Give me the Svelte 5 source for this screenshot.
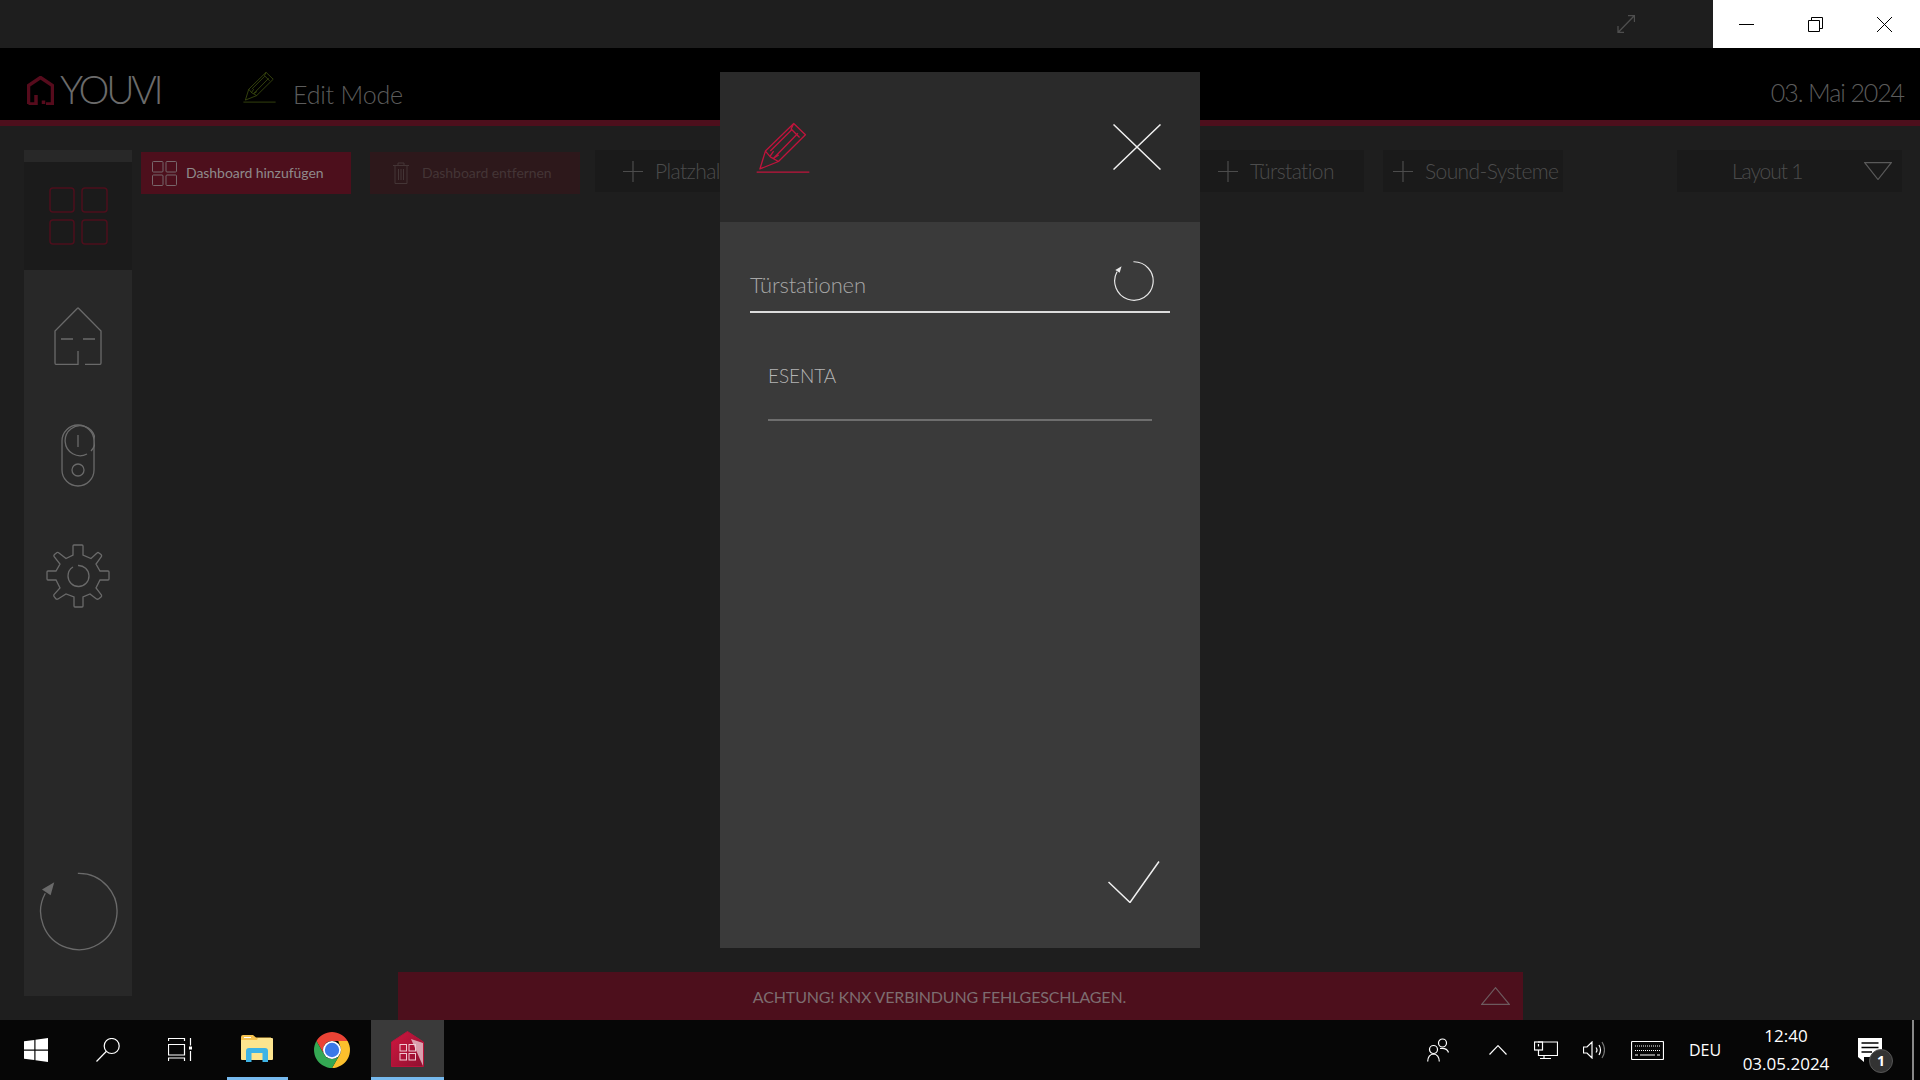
{#snippet pencil(cls)}
	<svg class="pencil {cls}" viewBox="106 150 166 158">
		<path d="M118 295 L135 240 L222 155 L258 190 L175 272 Z M135 240 L150 258 L175 272 M150 240 L215 175 M160 262 L235 185 M222 155 L214 172 L240 198 M148 258 L160 240 M160 262 L176 252" />
		<path d="M108 305 H270" />
	</svg>
{/snippet}

{#snippet refresh(cls)}
	<svg class="refresh {cls}" viewBox="110 90 245 250">
		<path d="M232 100 A115 115 0 1 1 134 160" />
		<polygon points="161,127 124,149 150,166" />
	</svg>
{/snippet}

{#snippet plus()}
	<svg class="plus" viewBox="0 0 20 21"><path d="M10 0 V21 M0 10.5 H20" /></svg>
{/snippet}

<div class="screen">
	<div class="titlebar">
		<svg class="expand" viewBox="0 0 18 18"><path d="M1 11 V17.5 H7 M17.5 7 V.5 H11 M1 17.5 L17.5 .5" /></svg>
		<div class="winbtns">
			<svg viewBox="0 0 15 15" class="wmin"><path d="M0 7.5 H15" /></svg>
			<svg viewBox="0 0 15 15" class="wres"><path d="M3.5 3 V.5 H14.5 V11.5 H12 M.5 3.5 H11.5 V14.5 H.5 Z" /></svg>
			<svg viewBox="0 0 15 15" class="wclose"><path d="M0 0 L15 15 M15 0 L0 15" /></svg>
		</div>
	</div>

	<header class="head">
		<svg class="logo" viewBox="0 0 27 29">
			<path d="M1.5 28 V9.5 L13.5 1.5 L25.5 9.5 V28 H19 M1.5 28 H9 V19" />
			<path d="M16.5 24.5 V28" />
		</svg>
		<span class="brand">YOUVI</span>
		{@render pencil('green')}
		<span class="mode">Edit Mode</span>
		<span class="date">03. Mai 2024</span>
	</header>

	<main class="main">
		<nav class="sidebar">
			<div class="selected">
				<svg class="grid" viewBox="0 0 59 58">
					<rect x="1" y="1" width="24" height="24" rx="3" />
					<rect x="33" y="1" width="25" height="24" rx="3" />
					<rect x="1" y="33" width="24" height="24" rx="3" />
					<rect x="33" y="33" width="25" height="24" rx="3" />
				</svg>
			</div>
			<svg class="home" viewBox="0 0 48 58">
				<path d="M24 .7 L47 24 V56 Q47 57.3 46 57.3 H31 M24 .7 L1 24 V56 Q1 57.3 2 57.3 H24 V44" />
				<path d="M7 32 H19 M29 32 H41" />
			</svg>
			<svg class="door" viewBox="0 0 34 63">
				<rect x="1" y="1" width="32" height="61" rx="16" />
				<path d="M30 27 A15 15 0 1 0 26 30" />
				<path d="M17 11 V23" />
				<circle cx="17" cy="46" r="6" />
			</svg>
			<svg class="gear" viewBox="0 0 64 64">
				<path d="M28 1 H36 Q37 1 37 2 V11 L45 14.5 L51 9 Q52 8 53 9 L55 10.5 Q56 11.5 55.5 12.5 L50 20 L54 27 H62 Q63 27 63 28 V35 Q63 36 62 36 H54 L50 44 L55.5 51 Q56 52 55 53 L52.5 55 Q51.5 55.5 50.5 55 L44 50 L37 53 V62 Q37 63 36 63 H29 Q28 63 28 62 V53 L20 50 L12 55 Q11 55.5 10 55 L8 52.5 Q7.5 51.5 8 50.5 L14 44 L10 36 H2 Q1 36 1 35 V28 Q1 27 2 27 H10 L14 20 L8 12.5 Q7.5 11.5 8.5 10.5 L11 8.5 Q12 8 13 9 L20 14.5 L27 11 V2 Q27 1 28 1 Z" />
				<path d="M32 21.5 A10.5 10.5 0 1 1 22 32 A10.5 10.5 0 0 1 27 23" />
			</svg>
			{@render refresh('side')}
		</nav>

		<div class="content">
			<div class="toolbar">
				<div class="btn red">
					<svg class="btn-icon" viewBox="0 0 25 25">
						<rect x=".5" y=".5" width="10.5" height="10.5" rx="1" />
						<rect x="14" y=".5" width="10.5" height="10.5" rx="1" />
						<rect x=".5" y="14" width="10.5" height="10.5" rx="1" />
						<rect x="14" y="14" width="10.5" height="10.5" rx="1" />
					</svg>
					<span>Dashboard hinzufügen</span>
				</div>
				<div class="btn off">
					<svg class="trash" viewBox="0 0 16 22">
						<path d="M0 3.5 H16 M5 3.5 V1 H11 V3.5 M2 3.5 V21.5 H14 V3.5 M5.5 7 V18 M8 7 V18 M10.5 7 V18" />
					</svg>
					<span>Dashboard entfernen</span>
				</div>
				<div class="tool platz">{@render plus()}<span>Platzhalter</span></div>
				<div class="tool tuer">{@render plus()}<span>Türstation</span></div>
				<div class="tool sound">{@render plus()}<span>Sound-Systeme</span></div>
				<div class="tool layout">
					<span>Layout 1</span>
					<svg class="drop" viewBox="0 0 28 18"><path d="M.7 .6 H27.3 L14 17.5 Z" /></svg>
				</div>
			</div>

			<div class="banner">
				<span>ACHTUNG! KNX VERBINDUNG FEHLGESCHLAGEN.</span>
				<svg class="up" viewBox="0 0 29 18"><path d="M.7 17.3 L14.5 .7 L28.3 17.3 Z" /></svg>
			</div>
		</div>
	</main>

	<footer class="taskbar">
		<div class="slot">
			<svg class="i24" viewBox="0 0 24 24"><path class="fill" d="M0 3.3 L10.3 2 V11.5 H0 Z M11.5 1.7 L24 0 V11.5 H11.5 Z M0 12.7 H10.3 V22 L0 20.7 Z M11.5 12.7 H24 V24 L11.5 22.3 Z" /></svg>
		</div>
		<div class="slot">
			<svg class="i24 line" viewBox="0 0 24 24"><circle cx="15.7" cy="8" r="7.5" /><path d="M10.2 13.5 L.5 23.5" /></svg>
		</div>
		<div class="slot">
			<svg class="i24 line" viewBox="0 0 24 24">
				<path d="M.5 3 V.5 H16.5 V3 M.5 6.5 H16.5 V17 H.5 Z M.5 23 V20 H16.5 V23 M22.5 0 V7.5 M22.5 13 V23" />
				<rect class="fill" x="21" y="8.5" width="3" height="3" />
			</svg>
		</div>
		<div class="app explorer">
			<svg class="folder" viewBox="0 0 32 27">
				<path fill="#f6c350" d="M0 2 Q0 0 2 0 H12 L15 2.5 H30 V8 H0 Z" />
				<rect fill="#fff" x="3" y="2" width="7" height="1" />
				<path fill="#fde58f" d="M0 5 H16 L17 3 H31 Q32 3 32 4 V24 Q32 25 31 25 H1 Q0 25 0 24 Z" />
				<path fill="#3db3e6" d="M5 27 V16 Q5 13 8 13 H24 Q27 13 27 16 V27 H21.5 V18 H10.5 V27 Z" />
			</svg>
		</div>
		<div class="app chrome">
			<svg class="i36" viewBox="4 4 40 40">
				<path fill="#ea4335" d="M6.7 14 A20 20 0 0 1 41.3 14 H24 A10 10 0 0 0 15.3 29 Z" />
				<path fill="#fbc02d" d="M41.3 14 A20 20 0 0 1 24 44 L32.7 29 A10 10 0 0 0 32.7 19 L31 14 Z" />
				<path fill="#34a853" d="M24 44 A20 20 0 0 1 6.7 14 L15.3 29 A10 10 0 0 0 32.7 29 Z" />
				<circle fill="#fff" cx="24" cy="24" r="10" />
				<circle fill="#3b78e7" cx="24" cy="24" r="8" />
			</svg>
		</div>
		<div class="app current">
			<svg class="youvi" viewBox="0 0 33 36">
				<defs>
					<linearGradient id="houseFill" x1="0" y1="0" x2="1" y2="1">
						<stop offset="0" stop-color="#d0173f" />
						<stop offset="1" stop-color="#8e1030" />
					</linearGradient>
				</defs>
				<path fill="url(#houseFill)" stroke="#b8123a" d="M.5 11 L16.5 .5 L32.5 11 V35.5 H.5 Z" />
				<path fill="#e7c3cc" d="M20 8 L32 12 V35 Z" opacity=".8" />
				<g class="cells">
					<rect x="9" y="13.5" width="6.5" height="6.5" />
					<rect x="18" y="13.5" width="6.5" height="6.5" />
					<rect x="9" y="22.5" width="6.5" height="6.5" />
					<rect x="18" y="22.5" width="6.5" height="6.5" />
				</g>
			</svg>
		</div>

		<div class="tray">
			<svg class="people line" viewBox="0 0 22 24">
				<circle cx="15.5" cy="5" r="4" />
				<circle cx="6.5" cy="11.5" r="4" />
				<path d="M.7 23.5 Q1 16.5 6.5 16 Q12 16.5 12.3 23.5 M13 10.5 Q20 9.5 21.5 14.5" />
			</svg>
			<svg class="chev line" viewBox="0 0 18 10"><path d="M.5 9.5 L9 .7 L17.5 9.5" /></svg>
			<svg class="net line" viewBox="0 0 24 18">
				<path d="M4 1 H23.5 V14.5 H4.5 V9 M10 14.5 V17.5 M6 17.5 H17" />
				<rect x=".5" y="1" width="8" height="8" />
				<path d="M4.5 3 V5.5" />
			</svg>
			<svg class="vol line" viewBox="0 0 22 18">
				<path d="M.5 6 H4 L9 1 V17 L4 12 H.5 Z M13 6.5 Q15 9 13 11.5 M16 4 Q19 9 16 14" />
				<path class="dim" d="M19 1 Q24 9 19 17" />
			</svg>
			<svg class="kbd line" viewBox="0 0 33 19">
				<rect x=".5" y=".5" width="32" height="18" rx="1" />
				<path class="dots" d="M4 5 H29 M4 9.5 H29" />
				<path d="M4 14 H7 M9 14 H24 M26 14 H29" />
			</svg>
			<span class="lang">DEU</span>
			<div class="clock">
				<span>12:40</span>
				<span>03.05.2024</span>
			</div>
			<div class="notify">
				<svg class="bubble" viewBox="0 0 24 24">
					<path class="fill" d="M0 0 H24 V19 H6 V24 L0 19 Z" />
					<path class="cut" d="M3.5 5 H20.5 M3.5 9.5 H20.5 M3.5 14 H14" />
				</svg>
				<span class="badge">1</span>
			</div>
			<div class="desk"></div>
		</div>
	</footer>

	<section class="modal">
		<div class="modal-head">
			{@render pencil('crimson')}
			<svg class="close" viewBox="0 0 48 46"><path d="M.5 .5 L47.5 45.5 M47.5 .5 L.5 45.5" /></svg>
		</div>
		<div class="modal-body">
			<div class="field">
				<span>Türstationen</span>
				{@render refresh('small')}
			</div>
			<div class="item">ESENTA</div>
			<svg class="ok" viewBox="0 0 52 42"><path d="M.5 21 L22 41.5 L51 .5" /></svg>
		</div>
	</section>
</div>

<style>
	:global(body) {
		background: #1e1e1e;
	}

	svg {
		display: block;
		flex: none;
		fill: none;
	}

	.screen {
		position: relative;
		width: 1920px;
		height: 1080px;
		overflow: hidden;
		display: flex;
		flex-direction: column;
		background: #1e1e1e;
		font-family: Lato, 'Open Sans', sans-serif;
		font-weight: 300;
	}

	.titlebar {
		height: 48px;
		flex: none;
		display: flex;
		align-items: center;
		justify-content: flex-end;
	}

	.expand {
		width: 18px;
		height: 18px;
		margin-right: 78px;
		stroke: #4e4e4e;
		stroke-width: 1.3;
	}

	.winbtns {
		width: 207px;
		height: 48px;
		background: #fff;
		display: flex;
		align-items: center;
		padding-left: 26px;
		box-sizing: border-box;
	}

	.winbtns svg {
		width: 15px;
		height: 15px;
		stroke: #000;
		stroke-width: 1;
	}

	.wres {
		margin-left: 54px;
	}

	.wclose {
		margin-left: 54px;
	}

	.head {
		height: 72px;
		flex: none;
		box-sizing: content-box;
		background: #000;
		border-bottom: 6px solid #4d0f1c;
		display: flex;
		align-items: flex-start;
		position: relative;
	}

	.logo {
		width: 27px;
		height: 29px;
		margin: 28px 0 0 27px;
		stroke: #560b1c;
		stroke-width: 3.5;
	}

	.brand {
		width: 100px;
		margin: 17px 0 0 6px;
		font-size: 39px;
		line-height: 48px;
		color: #6b6b6b;
		letter-spacing: -3.3px;
		white-space: nowrap;
	}

	.pencil {
		width: 33px;
		height: 32px;
		stroke-width: 5;
		stroke-linejoin: round;
	}

	.pencil.green {
		margin: 23px 0 0 83px;
		stroke: #3f5010;
		stroke-width: 4;
	}

	.pencil.crimson {
		width: 54px;
		height: 53px;
		stroke: #c0143c;
		stroke-width: 4;
	}

	.mode {
		margin: 28px 0 0 17px;
		font-size: 25px;
		line-height: 36px;
		color: #5c5c5c;
		letter-spacing: -0.2px;
	}

	.date {
		margin: 26px 16px 0 auto;
		font-size: 25px;
		line-height: 36px;
		color: #5c5c5c;
		letter-spacing: -1.1px;
	}

	.main {
		flex: 1;
		min-height: 0;
		display: flex;
		padding-left: 24px;
	}

	.sidebar {
		width: 108px;
		margin: 24px 0;
		background: #282828;
		display: flex;
		flex-direction: column;
		align-items: center;
		flex: none;
	}

	.selected {
		margin-top: 12px;
		height: 108px;
		width: 100%;
		background: #1b1b1b;
		display: flex;
		align-items: center;
		justify-content: center;
	}

	.grid {
		width: 59px;
		height: 58px;
		stroke: #4d0f1c;
		stroke-width: 1.5;
	}

	.home,
	.door,
	.gear {
		stroke: #6a6a6a;
		stroke-width: 1.3;
	}

	.home {
		width: 48px;
		height: 58px;
		margin-top: 37px;
	}

	.door {
		width: 34px;
		height: 63px;
		margin-top: 59px;
	}

	.gear {
		width: 64px;
		height: 64px;
		margin-top: 57px;
	}

	.refresh {
		width: 82px;
		height: 83px;
		stroke: #6a6a6a;
		stroke-width: 4;
	}

	.refresh polygon {
		fill: #6a6a6a;
		stroke: none;
	}

	.refresh.side {
		margin-top: auto;
		margin-bottom: 43px;
	}

	.refresh.small {
		width: 41px;
		height: 42px;
		stroke: #e8e8e8;
		stroke-width: 7;
		margin: 0 16px 9px 0;
	}

	.refresh.small polygon {
		fill: #e8e8e8;
	}

	.content {
		flex: 1;
		min-width: 0;
		display: flex;
		flex-direction: column;
		justify-content: space-between;
		padding-top: 24px;
		padding-right: 18px;
	}

	.toolbar {
		display: flex;
		align-items: flex-start;
		padding-left: 9px;
	}

	.btn {
		margin-top: 2px;
		height: 42px;
		width: 210px;
		box-sizing: border-box;
		display: flex;
		align-items: center;
		font-size: 14px;
		font-weight: 400;
		letter-spacing: -0.05px;
		white-space: nowrap;
	}

	.btn span {
		margin-top: -2px;
	}

	.btn.red {
		background: #4d0f1c;
		color: #8f8a8b;
		padding-left: 11px;
	}

	.btn.off {
		margin-left: 19px;
		background: #2d181b;
		color: #443536;
		padding-left: 23px;
	}

	.btn-icon {
		width: 25px;
		height: 25px;
		stroke: #77666a;
		margin-right: 9px;
	}

	.trash {
		width: 16px;
		height: 22px;
		stroke: #443536;
		margin-right: 13px;
	}

	.tool {
		height: 42px;
		background: #1a1a1a;
		display: flex;
		align-items: center;
		font-size: 21px;
		letter-spacing: -0.6px;
		color: #4c4c4c;
		box-sizing: border-box;
		white-space: nowrap;
	}

	.tool span {
		margin-top: -2px;
	}

	.plus {
		width: 20px;
		height: 21px;
		stroke: #4c4c4c;
		stroke-width: 1.2;
		margin-right: 12px;
	}

	.platz {
		margin-left: 15px;
		width: 200px;
		padding-left: 28px;
	}

	.tuer {
		margin-left: auto;
		width: 176px;
		padding-left: 30px;
	}

	.sound {
		margin-left: 19px;
		width: 180px;
		padding-left: 10px;
	}

	.layout {
		margin-left: 114px;
		width: 225px;
		padding-left: 55px;
		letter-spacing: -1.1px;
	}

	.drop {
		width: 28px;
		height: 18px;
		margin-left: auto;
		margin-right: 10px;
		stroke: #5a5a5a;
		stroke-width: 1.2;
	}

	.banner {
		margin-left: 266px;
		width: 1125px;
		height: 48px;
		background: #4d0f1c;
		color: #7d6d70;
		display: flex;
		align-items: center;
		font-size: 16px;
		font-weight: 400;
		letter-spacing: -0.15px;
	}

	.banner span {
		flex: 1;
		text-align: center;
	}

	.up {
		width: 29px;
		height: 18px;
		margin: 0 13px 0 0;
		stroke: #6d5a5e;
		stroke-width: 1.2;
	}

	.taskbar {
		height: 60px;
		flex: none;
		background: #060606;
		display: flex;
		align-items: center;
		color: #fff;
		font-family: 'Open Sans', sans-serif;
		font-weight: 400;
	}

	.slot {
		width: 72px;
		height: 60px;
		display: flex;
		align-items: center;
		justify-content: center;
	}

	.i24 {
		width: 24px;
		height: 24px;
	}

	.i36 {
		width: 36px;
		height: 36px;
	}

	.fill {
		fill: #fff;
	}

	.line {
		stroke: #fff;
		stroke-width: 1.2;
	}

	.line .fill {
		stroke: none;
	}

	.app {
		height: 60px;
		box-sizing: border-box;
		display: flex;
		align-items: center;
		justify-content: center;
	}

	.explorer {
		margin-left: 11px;
		width: 61px;
		border-bottom: 3px solid #76b9ed;
	}

	.folder {
		width: 32px;
		height: 27px;
		margin-right: 2px;
	}

	.chrome {
		margin-left: 14px;
		width: 60px;
	}

	.current {
		margin-left: 9px;
		width: 73px;
		background: #3a3a3a;
		border-bottom: 3px solid #76b9ed;
	}

	.youvi {
		width: 33px;
		height: 36px;
	}

	.cells rect {
		fill: none;
		stroke: #f0c8d2;
		stroke-width: 1;
	}

	.tray {
		margin-left: auto;
		display: flex;
		align-items: center;
		height: 60px;
	}

	.people {
		width: 22px;
		height: 24px;
	}

	.chev {
		width: 18px;
		height: 10px;
		margin-left: 40px;
	}

	.net {
		width: 24px;
		height: 18px;
		margin-left: 27px;
	}

	.vol {
		width: 22px;
		height: 18px;
		margin-left: 25px;
	}

	.vol .dim {
		stroke: #777;
	}

	.kbd {
		width: 33px;
		height: 19px;
		margin-left: 26px;
	}

	.kbd .dots {
		stroke-dasharray: 1 1;
	}

	.lang {
		margin-left: 25px;
		width: 34px;
		font-size: 16px;
	}

	.clock {
		margin-left: 19px;
		width: 88px;
		display: flex;
		flex-direction: column;
		align-items: center;
		font-size: 17px;
		line-height: 28px;
		white-space: nowrap;
	}

	.notify {
		position: relative;
		width: 24px;
		height: 24px;
		margin-left: 28px;
	}

	.bubble {
		width: 24px;
		height: 24px;
	}

	.bubble .cut {
		stroke: #000;
		stroke-width: 1.3;
	}

	.badge {
		position: absolute;
		left: 11px;
		top: 11px;
		width: 24px;
		height: 24px;
		box-sizing: border-box;
		border-radius: 50%;
		background: #333;
		border: 1px solid #555;
		font-size: 14px;
		font-weight: 700;
		line-height: 22px;
		text-align: center;
	}

	.desk {
		width: 2px;
		height: 60px;
		background: #888;
		margin: 0 6px 0 30px;
	}

	.modal {
		position: absolute;
		left: 720px;
		top: 72px;
		width: 480px;
		height: 876px;
		display: flex;
		flex-direction: column;
		background: #3a3a3a;
	}

	.modal-head {
		height: 150px;
		flex: none;
		background: #2a2a2a;
		display: flex;
		align-items: center;
		justify-content: space-between;
		padding: 0 39px 0 36px;
	}

	.close {
		width: 48px;
		height: 46px;
		stroke: #f0f0f0;
		stroke-width: 1.5;
	}

	.modal-body {
		flex: 1;
		display: flex;
		flex-direction: column;
		padding: 33px 30px 0;
	}

	.field {
		height: 56px;
		border-bottom: 2px solid #dcdcdc;
		display: flex;
		align-items: flex-end;
		justify-content: space-between;
		font-size: 22px;
		letter-spacing: -0.15px;
		color: #a6a6a6;
	}

	.field span {
		line-height: 52px;
	}

	.item {
		margin: 0 18px;
		height: 106px;
		box-sizing: content-box;
		border-bottom: 2px solid #6e6e6e;
		font-size: 19px;
		letter-spacing: -0.1px;
		color: #b4b4b4;
		line-height: 126px;
	}

	.ok {
		width: 52px;
		height: 42px;
		margin: auto 10px 45px auto;
		stroke: #f0f0f0;
		stroke-width: 1.5;
	}
</style>
